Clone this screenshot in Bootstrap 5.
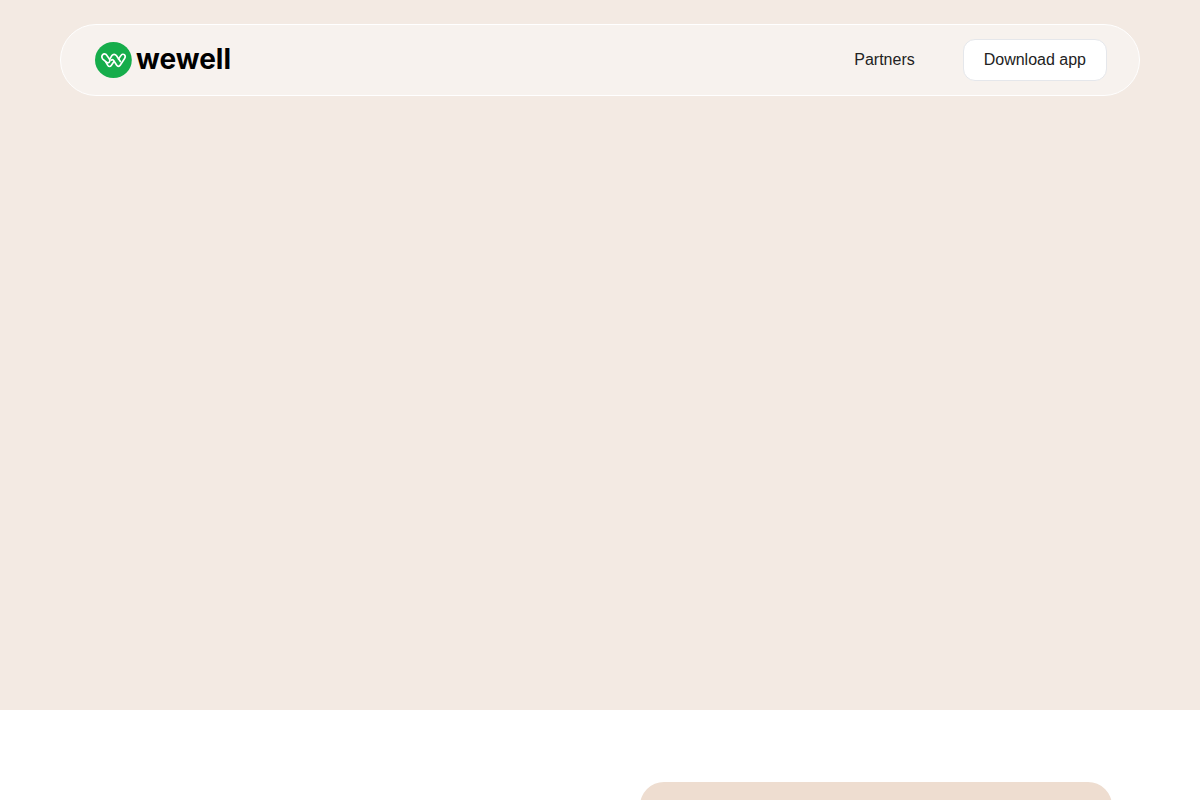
<!DOCTYPE html>
<html lang="en">
<head>
<meta charset="utf-8">
<meta name="viewport" content="width=device-width, initial-scale=1">
<title>wewell</title>
<link href="https://cdn.jsdelivr.net/npm/bootstrap@5.3.0/dist/css/bootstrap.min.css" rel="stylesheet">
<style>
  body { font-family: "Liberation Sans", Arial, sans-serif; color: #222; }
  .hero { background: #f3eae3; min-height: calc(100vh - 90px); }
  .shell { max-width: 1080px; }
  .site-nav { min-height: 72px; padding: 0 32px 0 34px; border: 1px solid #fff; border-radius: 36px; background: #f7f2ee; }
  .brand-name { font: 700 28px/32px Inter, sans-serif; color: #000; padding-bottom: 2px; }
  .nav-text { color: #222; }
  .btn-app { --bs-btn-bg: #fff; --bs-btn-color: #222; --bs-btn-border-color: #e5e7eb; --bs-btn-hover-bg: #fafafa; --bs-btn-padding-x: 20px; --bs-btn-padding-y: 8px; --bs-btn-border-radius: 12px; }
  .intro { max-width: 1024px; padding-top: 72px; column-gap: 80px; }
  .intro-panel { min-height: 480px; border-radius: 24px; background: #eeddd0; }
</style>
</head>
<body class="vh-100 overflow-hidden bg-white">
<header class="hero pt-4 px-3">
  <nav class="site-nav shell mx-auto d-flex align-items-center justify-content-between" aria-label="Main">
    <a href="#" class="d-flex align-items-center gap-1 text-decoration-none">
      <svg width="37" height="36" viewBox="0 0 37 36" fill="none" aria-hidden="true">
        <ellipse cx="18.4" cy="18" rx="18.4" ry="18" fill="#16ad4b"/>
        <g transform="translate(.6 .2) scale(.96 .98)" stroke="#fff" stroke-width="1.7" stroke-linejoin="round" stroke-linecap="round">
          <path d="M7.200 16.900C5.200 14 8 10.700 11 12.600L14.600 17.500C16 19.800 12.900 22.300 11.200 20.300Z"/>
          <path d="M10.700 20.300L12.700 23.700C13.600 25.200 15.300 25.200 16.300 23.700L19.300 19.500"/>
          <path d="M14.600 17.500L17 13.600C18.200 11.900 20.400 12 21.600 13.600L25.800 19.700"/>
          <path d="M16.300 18.300C17.400 17.200 18.600 18.200 19.300 19.500L22 23.600C23 25.100 24.600 25.100 25.600 23.600L30.200 16.700C32.200 13.300 28.700 10.500 26.300 13.700L23.900 17.200"/>
        </g>
      </svg>
      <span class="brand-name">wewell</span>
    </a>
    <div class="d-flex align-items-center gap-5">
      <a href="#partners" class="nav-text text-decoration-none">Partners</a>
      <button type="button" class="btn btn-app">Download app</button>
    </div>
  </nav>
</header>
<main class="intro mx-auto row row-cols-2 gx-0 flex-nowrap">
  <section class="col flex-shrink-1" id="partners"></section>
  <section class="intro-panel col flex-shrink-1"></section>
</main>
<script src="https://cdn.jsdelivr.net/npm/bootstrap@5.3.0/dist/js/bootstrap.bundle.min.js"></script>
</body>
</html>
